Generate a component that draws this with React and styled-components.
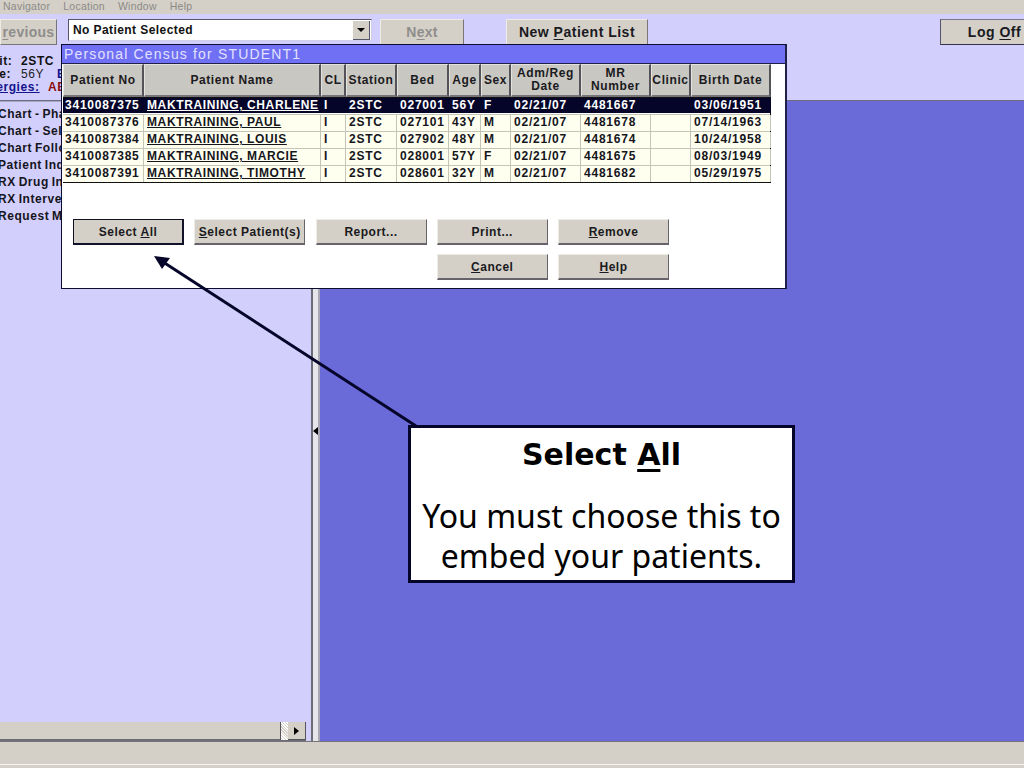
import React from "react";
import styled, { createGlobalStyle } from "styled-components";

const Global = createGlobalStyle`
  html, body { margin: 0; padding: 0; background: #d4d0c8; }
  body { width: 1024px; height: 768px; overflow: hidden; font-family: "Liberation Sans", Arial, sans-serif; }
`;
const Page = styled.div`position: relative; width: 1024px; height: 768px; overflow: hidden; display: flex; flex-direction: column; background: #d4d0c8;`;
const MenuBar = styled.div`height: 14px; flex: none; display: flex; align-items: center; gap: 13px; padding-left: 3px; background: #d4d0c8; color: #8c8a86; font-size: 10.5px; letter-spacing: .25px; line-height: 10px; padding-bottom: 3px; box-sizing: border-box;`;
const Top = styled.div`height: 87px; flex: none; background: #d3cffd; display: flex; flex-direction: column; box-sizing: border-box; border-bottom: 1px solid #6f6e80;`;
const ToolRow = styled.div`height: 26px; margin-top: 5px; display: flex; align-items: flex-start; position: relative;`;
const ToolButton = styled.div`
  width: ${p => p.$w}px; height: 26px; margin-left: ${p => p.$ml || 0}px; box-sizing: border-box; flex: none;
  background: #d4d0c8; border: 1px solid #eeeae4; border-right-color: #77757a; border-bottom-color: #77757a;
  ${p => p.$dark && "border: 1px solid #33334a; border-left-color: #55556a; border-top-color: #77778a;"}
  display: flex; align-items: center; justify-content: center; font-size: 14px; font-weight: bold; letter-spacing: ${p => p.$off ? ".3px" : ".5px"};
  color: ${p => p.$off ? "#8f8d8b" : "#1a1a1f"}; white-space: nowrap; overflow: hidden;
  u { text-underline-offset: 2px; }
`;
const Combo = styled.div`
  width: 304px; height: 22px; margin-left: 11px; box-sizing: border-box; flex: none; background: #fff;
  border: 1px solid #55556a; border-right-color: #cfcfe8; border-bottom-color: #cfcfe8; display: flex; align-items: center; justify-content: space-between;
  padding-left: 4px; font-size: 12px; font-weight: bold; letter-spacing: .42px; color: #111;
`;
const ComboArrow = styled.div`width: 16px; height: 18px; margin-right: 1px; background: #d4d0c8; border-right: 1px solid #55556a; border-bottom: 1px solid #55556a; display: flex; align-items: center; justify-content: center;`;
const Down = styled.div`border-left: 4px solid transparent; border-right: 4px solid transparent; border-top: 4px solid #000;`;
const Info = styled.div`margin-top: 10px; margin-left: -18px; font-size: 12px; font-weight: bold; line-height: 13px; letter-spacing: .6px; color: #111; white-space: nowrap;`;
const InfoLine = styled.div`display: flex; margin-left: ${p => p.$ml || 0}px;`;
const Label = styled.span`width: ${p => p.$w}px; flex: none; ${p => p.$blue && "color: #14148c; text-decoration: underline;"}`;
const Thin = styled.span`font-weight: normal; color: #222; width: 36px; flex: none;`;
const Blue = styled.span`color: #14148c;`;
const Red = styled.span`color: #8c1010;`;
const Body = styled.div`flex: 1; display: flex; min-height: 0;`;
const Left = styled.div`width: 311px; flex: none; background: #d3cffd; display: flex; flex-direction: column; box-sizing: border-box; border-top: 1px solid #a9a7c0;`;
const NavList = styled.div`flex: 1; padding-top: 4px; margin-left: -2px;`;
const NavItem = styled.div`height: 17px; line-height: 17px; font-size: 12px; font-weight: bold; letter-spacing: .55px; word-spacing: -1px; color: #15151c; white-space: nowrap;`;
const HScroll = styled.div`height: 18px; display: flex; background: #e9e6f4; margin-right: 5px; border-bottom: 1px solid #6d6b78; box-sizing: content-box;`;
const Thumb = styled.div`width: 281px; background: #d4d0c8; border-right: 1px solid #55535a; border-bottom: 1px solid #6d6b78; box-sizing: border-box;`;
const Track = styled.div`width: 7px; background: repeating-linear-gradient(45deg, #fff 0 1px, #d4d0c8 1px 2px);`;
const ScrollBtn = styled.div`width: 18px; background: #d4d0c8; border-right: 1px solid #55535a; border-bottom: 1px solid #55535a; box-sizing: border-box; display: flex; align-items: center; justify-content: center;`;
const TriRight = styled.div`border-top: 4px solid transparent; border-bottom: 4px solid transparent; border-left: 5px solid #000;`;
const Splitter = styled.div`width: 9px; flex: none; box-sizing: border-box; border-left: 2px solid #6c6b78; border-right: 2px solid #a8a7b4; background: #e6e5ea; display: flex; align-items: center; margin-top: 0;`;
const TriLeft = styled.div`border-top: 4px solid transparent; border-bottom: 4px solid transparent; border-right: 5px solid #000; margin-top: 19px;`;
const Right = styled.div`flex: 1; background: #6a6bd8;`;
const Status = styled.div`height: 27px; box-sizing: border-box; flex: none; background: #d4d0c8; border-top: 1px solid #77757a; position: relative; &::after { content: ""; position: absolute; left: 0; right: 0; bottom: 3px; height: 1px; background: #f6f4ee; }`;

const Dialog = styled.div`position: absolute; left: 61px; top: 44px; width: 726px; height: 245px; box-sizing: border-box; background: #fff; border: 1px solid #0d0d30; border-right: 2px solid #20204a; display: flex; flex-direction: column;`;
const Title = styled.div`height: 19px; flex: none; box-sizing: border-box; padding-left: 2px; background: #7070f4; color: #e2e2ff; font-size: 14px; line-height: 18px; font-weight: normal; letter-spacing: 1.16px; white-space: nowrap; border-bottom: 1px solid #20204a;`;
const cols = "81px 177px 25px 51px 52px 32px 30px 70px 70px 40px 80px";
const Table = styled.div`margin-left: 1px; width: 708px;`;
const HeadRow = styled.div`display: grid; grid-template-columns: ${cols}; height: 33px; background: #c9c7c2;`;
const HeadCell = styled.div`box-sizing: border-box; border: 1px solid #e4e2dd; border-right: 2px solid #55535a; border-bottom: 2px solid #77757a; display: flex; align-items: center; justify-content: center; text-align: center; font-size: 12px; line-height: 13px; font-weight: bold; letter-spacing: .6px; color: #1a1a20; overflow: hidden; white-space: pre-line;`;
const Rows = styled.div`display: flex; flex-direction: column; border-bottom: 1px solid #111; border-right: 1px solid #111; `;
const Row = styled.div`display: grid; grid-template-columns: ${cols}; height: 17px; box-sizing: border-box; background: ${p => p.$sel ? "#05052a" : "#fffff0"}; color: ${p => p.$sel ? "#fff" : "#15151c"}; border-top: 1px solid ${p => p.$sel ? "#111" : "#c4c4b8"}; ${p => p.$sel && "border-bottom: 1px solid #fff;"}`;
const Cell = styled.div`box-sizing: border-box; padding-left: ${p => p.$pl ?? 3}px; font-size: 12px; line-height: 15px; font-weight: bold; letter-spacing: ${p => p.$ls ?? .83}px; white-space: nowrap; overflow: hidden; border-right: 1px solid ${p => p.$sel ? "#05052a" : "#c4c4b8"}; ${p => p.$u && "text-decoration: underline; text-underline-offset: 1px;"}`;
const Buttons = styled.div`margin: 36px 0 0 11px; display: grid; grid-template-columns: repeat(5, 111px); column-gap: 10.25px; row-gap: 9px;`;
const DlgButton = styled.div`
  height: 26px; box-sizing: border-box; background: #d4d0c8; display: flex; align-items: center; justify-content: center;
  font-size: 12px; font-weight: bold; letter-spacing: .5px; color: #1a1a20; white-space: nowrap;
  border: 1px solid #eeece6; border-right: 1px solid #66646a; border-bottom: 2px solid #66646a;
  ${p => p.$def && "border: 1px solid #111128; border-right-width: 2px; border-bottom-width: 2px;"}
  ${p => p.$col && `grid-column: ${p.$col};`}
`;
const Callout = styled.div`position: absolute; left: 408px; top: 425px; width: 387px; height: 158px; box-sizing: border-box; background: #fff; border: 3px solid #05052a; text-align: center; color: #000; font-family: "Noto Sans", "DejaVu Sans", sans-serif; display: flex; flex-direction: column; align-items: center;`;
const CalloutTitle = styled.div`font-family: "DejaVu Sans", sans-serif; font-size: 30px; font-weight: bold; line-height: 40px; margin-top: 7px; u { text-underline-offset: 4px; }`;
const CalloutText = styled.div`font-size: 32px; line-height: 40px; margin-top: 21px; white-space: nowrap;`;
const Arrow = styled.svg`position: absolute; left: 0; top: 0; width: 1024px; height: 768px; pointer-events: none;`;

const head = ["Patient No", "Patient Name", "CL", "Station", "Bed", "Age", "Sex", "Adm/Reg\nDate", "MR\nNumber", "Clinic", "Birth Date"];
const rows = [
  ["3410087375", "MAKTRAINING, CHARLENE", "I", "2STC", "027001", "56Y", "F", "02/21/07", "4481667", "", "03/06/1951"],
  ["3410087376", "MAKTRAINING, PAUL", "I", "2STC", "027101", "43Y", "M", "02/21/07", "4481678", "", "07/14/1963"],
  ["3410087384", "MAKTRAINING, LOUIS", "I", "2STC", "027902", "48Y", "M", "02/21/07", "4481674", "", "10/24/1958"],
  ["3410087385", "MAKTRAINING, MARCIE", "I", "2STC", "028001", "57Y", "F", "02/21/07", "4481675", "", "08/03/1949"],
  ["3410087391", "MAKTRAINING, TIMOTHY", "I", "2STC", "028601", "32Y", "M", "02/21/07", "4481682", "", "05/29/1975"],
];
const nav = ["Chart - Pharmacy", "Chart - Select", "Chart Follow-up", "Patient Inquiry", "RX Drug Info", "RX Intervention", "Request Menu"];

export default function App() {
  return (
    <Page>
      <Global />
      <MenuBar><span>Navigator</span><span>Location</span><span>Window</span><span>Help</span></MenuBar>
      <Top>
        <ToolRow>
          <ToolButton $w={57} $off><span><u>r</u>evious</span></ToolButton>
          <Combo>No Patient Selected<ComboArrow><Down /></ComboArrow></Combo>
          <ToolButton $w={84} $ml={8} $off><span>N<u>e</u>xt</span></ToolButton>
          <ToolButton $w={142} $ml={42}><span>New <u>P</u>atient List</span></ToolButton>
          <ToolButton $w={109} $ml={292} $dark><span>Log <u>O</u>ff</span></ToolButton>
        </ToolRow>
        <Info>
          <InfoLine><Label $w={39}>Unit:</Label>2STC</InfoLine>
          <InfoLine><Label $w={39}>Age:</Label><Thin>56Y</Thin><Blue>BSA</Blue></InfoLine>
          <InfoLine $ml={-3}><Label $w={69} $blue>Allergies:</Label><Red>ABC</Red></InfoLine>
        </Info>
      </Top>
      <Body>
        <Left>
          <NavList>{nav.map(n => <NavItem key={n}>{n}</NavItem>)}</NavList>
          <HScroll><Thumb /><Track /><ScrollBtn><TriRight /></ScrollBtn></HScroll>
        </Left>
        <Splitter><TriLeft /></Splitter>
        <Right />
      </Body>
      <Status />
      <Dialog>
        <Title>Personal Census for STUDENT1</Title>
        <Table>
          <HeadRow>{head.map(h => <HeadCell key={h}>{h}</HeadCell>)}</HeadRow>
          <Rows>
            {rows.map((r, i) => (
              <Row key={r[0]} $sel={i === 0}>
                {r.map((c, j) => <Cell key={j} $sel={i === 0} $u={j === 1} $ls={j === 1 ? .62 : .78} $pl={j === 0 ? 2 : 3}>{c}</Cell>)}
              </Row>
            ))}
          </Rows>
        </Table>
        <Buttons>
          <DlgButton $def><span>Select <u>A</u>ll</span></DlgButton>
          <DlgButton><span><u>S</u>elect Patient(s)</span></DlgButton>
          <DlgButton>Report...</DlgButton>
          <DlgButton>Print...</DlgButton>
          <DlgButton><span><u>R</u>emove</span></DlgButton>
          <DlgButton $col={4}><span><u>C</u>ancel</span></DlgButton>
          <DlgButton $col={5}><span><u>H</u>elp</span></DlgButton>
        </Buttons>
      </Dialog>
      <Arrow viewBox="0 0 1024 768">
        <line x1="416" y1="426" x2="160" y2="260" stroke="#05052a" strokeWidth="3" />
        <polygon points="154,256 170,258 162,269" fill="#05052a" />
      </Arrow>
      <Callout>
        <CalloutTitle>Select <u>A</u>ll</CalloutTitle>
        <CalloutText>You must choose this to<br />embed your patients.</CalloutText>
      </Callout>
    </Page>
  );
}
